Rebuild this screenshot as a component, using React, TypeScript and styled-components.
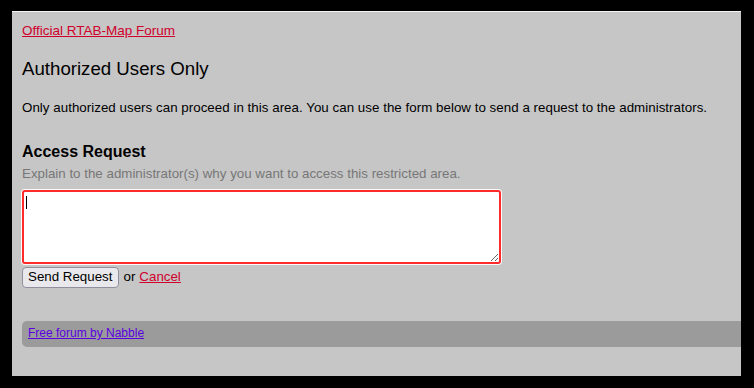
import React from "react";
import styled, { createGlobalStyle } from "styled-components";

const GlobalStyle = createGlobalStyle`
  html, body {
    margin: 0;
    padding: 0;
    background: #000;
  }
  body {
    font-family: "Liberation Sans", Arial, sans-serif;
    color: #000;
  }
`;

const Frame = styled.div`
  box-sizing: border-box;
  margin: 11px 0 0 12px;
  width: 729px;
  height: 365px;
  border-top: 1px solid #f4f4f4;
  background: #c6c6c6;
  padding: 11px 0 0 10px;
  overflow: hidden;
  display: flex;
  flex-direction: column;
`;

const RedLink = styled.a`
  color: #d0002c;
  text-decoration: underline;
  cursor: pointer;
`;

const TopLine = styled.div`
  font-size: 13.5px;
  line-height: 16px;
`;

const Title = styled.h1`
  margin: 19px 0 0;
  font-size: 18.67px;
  line-height: 22px;
  font-weight: normal;
`;

const Intro = styled.p`
  margin: 20px 0 0;
  font-size: 13.33px;
  line-height: 16px;
  letter-spacing: 0.03px;
`;

const SectionTitle = styled.h2`
  margin: 26px 0 0;
  font-size: 16px;
  line-height: 19px;
  font-weight: bold;
`;

const Hint = styled.div`
  margin: 5px 0 0;
  font-size: 13.33px;
  line-height: 16px;
  color: #777;
`;

const TextWrap = styled.div`
  position: relative;
  margin-top: 8px;
  width: 479px;
  height: 74px;
`;

const TextBox = styled.textarea`
  display: block;
  box-sizing: border-box;
  width: 479px;
  height: 74px;
  margin: 0;
  padding: 4px;
  border: 2px solid #ff2a2a;
  border-radius: 3px;
  box-shadow: 0 0 0 1px #fafafa;
  background: #fff;
  outline: none;
  font-family: "Liberation Sans", Arial, sans-serif;
  font-size: 13.33px;
`;

const Caret = styled.span`
  position: absolute;
  left: 4px;
  top: 6px;
  width: 1px;
  height: 13px;
  background: #000;
  pointer-events: none;
`;

const Actions = styled.div`
  margin-top: 3px;
  display: flex;
  align-items: baseline;
  font-size: 13.33px;
  line-height: 16px;
`;

const SendButton = styled.button`
  box-sizing: border-box;
  height: 21px;
  padding: 0 6px 2px 5px;
  margin: 0 4px 0 0;
  background: #e9e9ed;
  border: 1px solid #8f8f9d;
  border-radius: 4px;
  font-family: "Liberation Sans", Arial, sans-serif;
  font-size: 13.33px;
  color: #000;
`;

const Or = styled.span`
  margin-right: 4px;
`;

const Footer = styled.div`
  box-sizing: border-box;
  margin-top: 33px;
  height: 26px;
  padding: 5px 0 0 6px;
  background: #9b9b9b;
  border-radius: 5px 0 0 5px;
  font-size: 12px;
  line-height: 14px;
`;

const FooterLink = styled.a`
  color: #5a00e0;
  text-decoration: underline;
  cursor: pointer;
`;

export default function App() {
  return (
    <>
      <GlobalStyle />
      <Frame>
        <TopLine>
          <RedLink>Official RTAB-Map Forum</RedLink>
        </TopLine>
        <Title>Authorized Users Only</Title>
        <Intro>
          Only authorized users can proceed in this area. You can use the form below to send a
          request to the administrators.
        </Intro>
        <SectionTitle>Access Request</SectionTitle>
        <Hint>Explain to the administrator(s) why you want to access this restricted area.</Hint>
        <TextWrap>
          <TextBox />
          <Caret />
        </TextWrap>
        <Actions>
          <SendButton>Send Request</SendButton>
          <Or>or</Or>
          <RedLink>Cancel</RedLink>
        </Actions>
        <Footer>
          <FooterLink>Free forum by Nabble</FooterLink>
        </Footer>
      </Frame>
    </>
  );
}
